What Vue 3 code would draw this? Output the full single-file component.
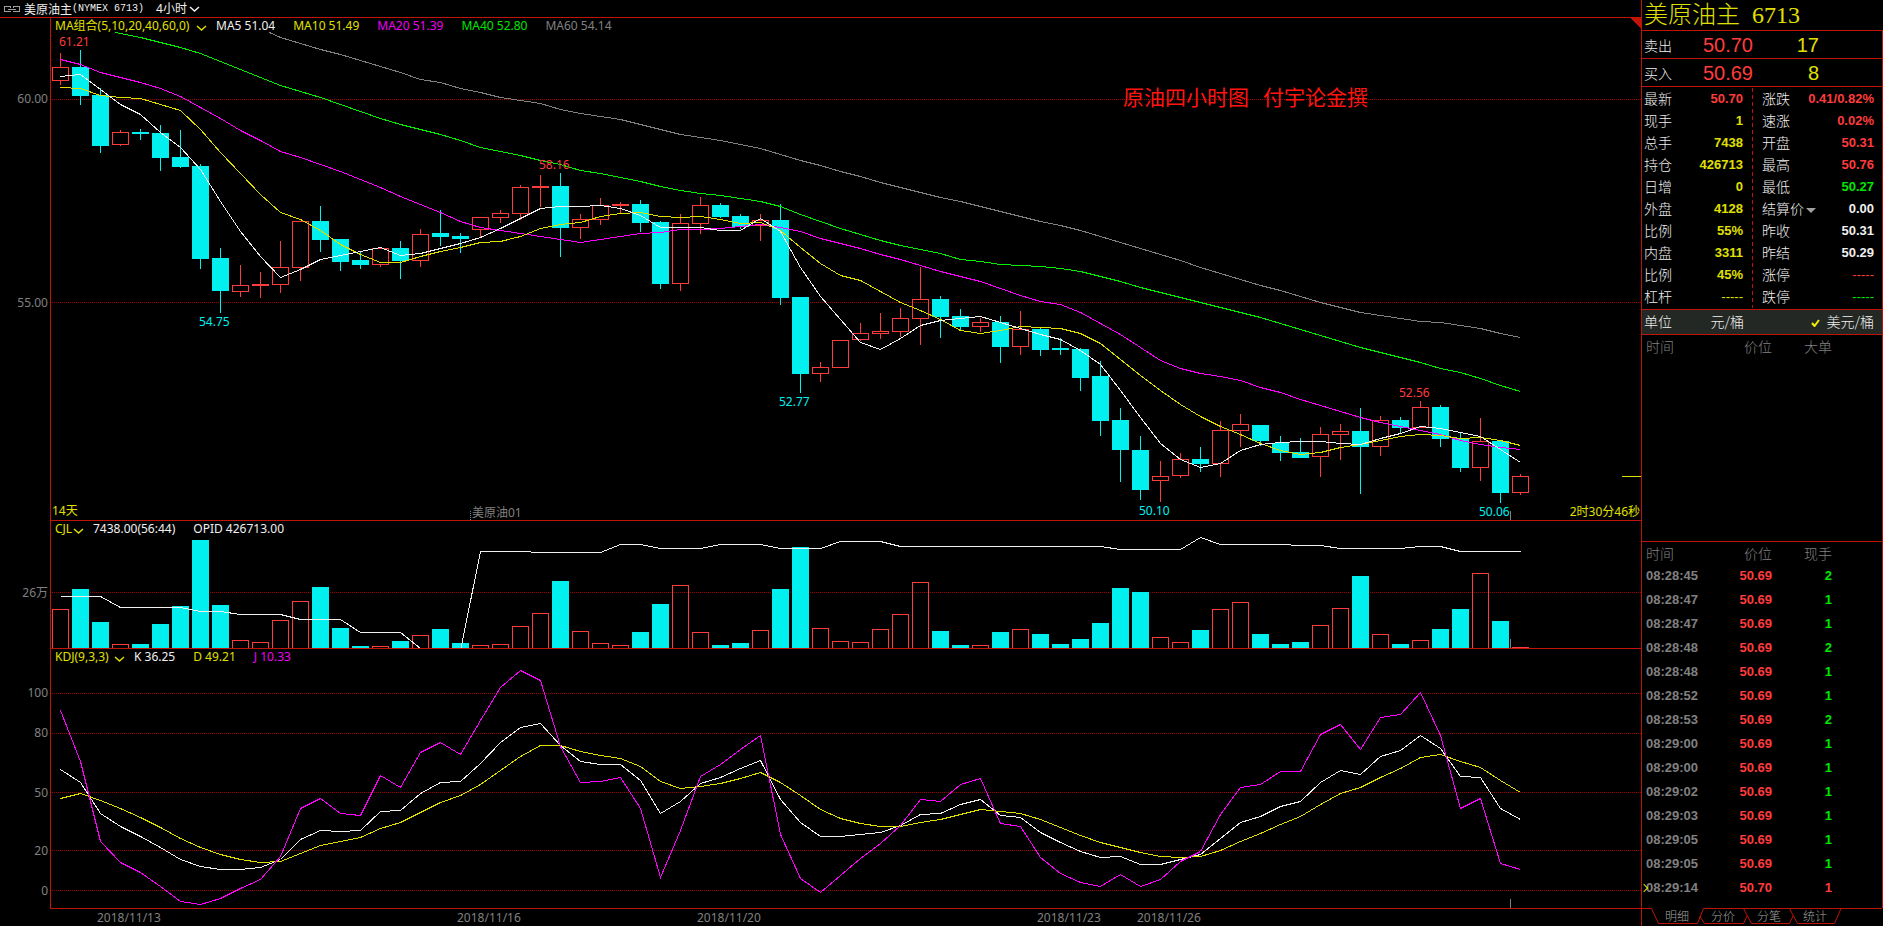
<script setup>
import { ref } from 'vue'

const FIRST_X = 60
const STEP = 20
const cx = (i) => FIRST_X + i * STEP

// Plot areas in canvas units: left, top, width, height
const price = { x: 51, y: 18, w: 1590, h: 502 }
const volume = { x: 51, y: 521, w: 1590, h: 127 }
const kdj = { x: 51, y: 649, w: 1590, h: 259 }
const box = (p) => `${p.x} ${p.y} ${p.w} ${p.h}`
const place = (p, x, y) => ({
  left: `${((x - p.x) / p.w) * 100}%`,
  top: `${((y - p.y) / p.h) * 100}%`
})
const level = (p, y) => ({ top: `${((y - p.y) / p.h) * 100}%` })

// direction, high, body top, body bottom, low
const candles = `R 53 67 81 85|C 50 67 96 105|C 88 95 146 153|R 130 132 145 146|C 129 132 134 140|C 125 133 158 171
C 130 157 167 168|C 164 166 259 269|C 248 258 291 313|R 265 285 292 297|R 272 284 286 298|R 241 267 285 293
R 221 221 268 281|C 206 221 240 252|C 239 239 262 271|C 252 260 265 269|R 248 248 265 267|C 241 248 261 279
R 229 234 261 267|C 210 233 237 246|C 233 236 239 253|R 217 217 230 238|R 210 213 218 223|R 185 187 214 220
R 175 186 188 207|C 173 186 228 257|R 214 219 228 239|R 198 205 220 225|R 202 204 206 213|C 200 204 223 232
C 221 222 284 289|R 214 223 284 291|R 197 205 224 234|C 203 205 217 218|C 214 216 227 229|R 214 220 226 241
C 204 220 298 305|C 297 297 374 393|R 362 367 374 382|R 340 340 368 368|R 323 333 340 341|R 313 331 334 339
R 308 318 332 337|R 267 299 319 345|C 296 299 317 338|C 309 316 327 330|R 318 322 327 332|C 316 322 347 363
R 311 329 347 355|C 328 329 350 356|C 338 348 350 355|C 348 349 378 391|C 361 376 421 436|C 408 420 450 482
C 436 450 490 500|R 461 476 481 502|R 453 459 476 478|C 447 459 464 472|R 421 430 464 477|R 414 424 431 447
C 425 425 441 446|C 436 443 453 461|C 438 452 458 458|R 427 434 457 477|R 424 431 435 460|C 408 431 447 494
R 416 420 447 456|C 417 420 428 434|R 401 407 428 428|C 405 407 439 447|C 433 438 468 472|R 418 441 468 481
C 441 441 493 503|R 474 476 493 495`
  .split(/[|\n]/)
  .map((row, i) => {
    const [dir, ...n] = row.trim().split(' ')
    const [high, top, bottom, low] = n.map(Number)
    return { up: dir === 'R', x: cx(i), high, top, bottom, low }
  })

const nums = (s) => s.split(' ').map(Number)
const line = (s, from = 0, lead = '') =>
  lead + nums(s).map((y, i) => `${cx(i + from) + 0.5},${y + 0.5}`).join(' ')

const averages = [
  { cls: 's-gray', pts: line('37 43 49 54 60 66 72 79 82 88 92 97 100 103 109 113 116 119 124 129 134 137 140 144 148 154 160 165 171 176 182 187 192 197 201 206 211 216 221 225 230 236 242 248 254 260 267 273 279 285 290 296 302 307 312 315 318 321 322 325 328 333 337', 11, '269.5,32.5 ') },
  { cls: 's-green', pts: line('37 42 47 53 61 69 77 85 91 97 104 111 118 124 129 134 140 147 151 155 160 164 170 173 177 181 186 190 193 195 198 201 206 214 221 228 234 240 245 249 253 259 261 264 265 266 268 271 276 281 287 292 297 302 307 312 317 323 329 335 341 347 352 357 362 368 372 378 385 391', 4, '115.5,32.5 ') },
  { cls: 's-magenta', pts: line('59 64 72 77 82 88 96 107 118 130 140 151 157 164 171 179 187 196 204 212 221 227 230 233 236 239 242 239 236 233 232 229 229 228 226 224 227 231 238 243 248 254 259 265 271 276 281 288 295 301 304 312 323 334 347 360 368 373 376 380 387 392 399 405 411 417 422 426 430 434 440 444 447 449') },
  { cls: 's-yellow', pts: line('87 88 95 97 98 104 110 129 152 173 194 212 219 230 244 254 262 262 256 251 247 242 241 236 228 224 222 216 213 212 216 217 216 219 223 222 230 247 263 275 280 291 302 310 319 330 333 330 326 327 328 333 343 359 375 390 404 416 426 434 443 450 454 452 447 444 440 436 434 435 438 437 440 445') },
  { cls: 's-white', pts: line('76 74 89 104 114 132 147 169 201 231 256 277 269 259 255 251 247 255 253 248 243 237 228 218 208 206 206 205 208 215 227 227 227 230 230 218 231 267 296 319 342 349 338 325 320 318 316 322 328 334 339 350 364 390 417 443 459 467 463 450 444 442 441 441 443 444 438 433 426 428 432 436 449 462') }
]

const bars = nums('609 589 622 644 644 624 606 540 605 640 642 620 601 587 628 646 646 641 635 629 643 645 644 626 613 581 631 643 645 632 604 585 632 645 643 630 589 547 628 641 642 629 614 582 631 645 645 632 629 634 644 639 623 588 592 637 642 630 609 602 634 644 642 625 608 576 634 644 640 629 609 573 621 647')
  .map((y, i) => ({ y, x: cx(i), up: candles[i].up }))
const openInterest = line('596 596 596 607 607 607 607 611 611 614 614 614 619 619 619 632 632 632 648 660 650 551 551 551 552 552 552 552 544 544 548 548 548 544 544 544 548 548 548 541 541 541 546 546 546 546 546 546 546 546 546 546 546 549 549 549 549 537 544 544 544 544 545 545 548 548 548 548 546 546 551 551 551 551')

const kdjLines = [
  { cls: 's-white', pts: line('769 782 813 826 836 847 859 866 869 869 867 859 839 830 831 830 811 810 793 782 781 763 742 727 723 745 761 764 764 780 813 801 783 777 768 760 799 822 836 836 834 832 825 814 813 804 799 815 817 832 842 851 857 856 864 864 859 854 838 822 816 806 801 782 770 774 756 750 735 748 776 777 808 819') },
  { cls: 's-yellow', pts: line('798 793 800 808 817 827 838 847 854 859 862 861 853 845 841 837 828 822 812 802 795 784 770 756 745 745 751 755 758 766 781 788 786 783 778 772 782 795 809 818 823 826 826 822 819 814 809 811 813 819 827 835 842 847 852 856 857 856 850 841 833 824 816 804 793 787 777 768 757 754 761 767 780 792') },
  { cls: 's-magenta', pts: line('710 761 841 862 872 886 901 904 898 888 879 856 808 798 813 815 775 787 752 742 754 720 687 670 680 746 782 781 777 808 877 830 776 764 749 735 834 878 892 875 858 843 825 799 801 784 778 823 826 857 873 882 886 874 886 879 861 851 814 787 784 771 771 734 724 749 717 714 692 735 808 798 863 869') }
]

const priceGrid = [{ y: 99, t: '60.00' }, { y: 302, t: '55.00' }]
const volumeGrid = [{ y: 592, t: '26万' }]
const kdjGrid = [{ y: 693, t: '100' }, { y: 733, t: '80' }, { y: 792, t: '50' }, { y: 850, t: '20' }, { y: 890, t: '0' }]

const marks = [
  { t: '61.21', x: 59, y: 42, cls: 'red' },
  { t: '54.75', x: 199, y: 322, cls: 'cyan' },
  { t: '58.16', x: 539, y: 165, cls: 'red' },
  { t: '52.77', x: 779, y: 402, cls: 'cyan' },
  { t: '50.10', x: 1139, y: 511, cls: 'cyan' },
  { t: '52.56', x: 1399, y: 393, cls: 'red' },
  { t: '50.06', x: 1479, y: 512, cls: 'cyan' },
  { t: '14天', x: 52, y: 511, cls: 'yellow' },
  { t: '美原油01', x: 472, y: 513, cls: 'gray' }
]
const dates = [
  { t: '2018/11/13', x: 97 },
  { t: '2018/11/16', x: 457 },
  { t: '2018/11/20', x: 697 },
  { t: '2018/11/23', x: 1037 },
  { t: '2018/11/26', x: 1137 }
]

const maLegend = [
  { t: 'MA5 51.04', cls: 'white' },
  { t: 'MA10 51.49', cls: 'yellow' },
  { t: 'MA20 51.39', cls: 'magenta' },
  { t: 'MA40 52.80', cls: 'green' },
  { t: 'MA60 54.14', cls: 'gray' }
]

const statsLeft = [
  ['最新', '50.70', 'red'], ['现手', '1', 'yellow'], ['总手', '7438', 'yellow'], ['持仓', '426713', 'yellow'],
  ['日增', '0', 'yellow'], ['外盘', '4128', 'yellow'], ['比例', '55%', 'yellow'], ['内盘', '3311', 'yellow'],
  ['比例', '45%', 'yellow'], ['杠杆', '-----', 'yellow plain']
]
const statsRight = [
  ['涨跌', '0.41/0.82%', 'red'], ['速涨', '0.02%', 'red'], ['开盘', '50.31', 'red'], ['最高', '50.76', 'red'],
  ['最低', '50.27', 'green'], ['结算价', '0.00', 'white'], ['昨收', '50.31', 'white'], ['昨结', '50.29', 'white'],
  ['涨停', '-----', 'red plain'], ['跌停', '-----', 'green plain']
]

const trades = [
  ['08:28:45', '50.69', 2], ['08:28:47', '50.69', 1], ['08:28:47', '50.69', 1], ['08:28:48', '50.69', 2],
  ['08:28:48', '50.69', 1], ['08:28:52', '50.69', 1], ['08:28:53', '50.69', 2], ['08:29:00', '50.69', 1],
  ['08:29:00', '50.69', 1], ['08:29:02', '50.69', 1], ['08:29:03', '50.69', 1], ['08:29:05', '50.69', 1],
  ['08:29:05', '50.69', 1], ['08:29:14', '50.70', 1]
]

const tabs = ['明细', '分价', '分笔', '统计']
const activeTab = ref('明细')
</script>

<template>
  <div class="terminal">
    <main class="charts">
      <header class="titlebar">
        <svg class="link-icon" width="16" height="6" viewBox="0 0 16 6" shape-rendering="crispEdges" aria-hidden="true">
          <path d="M6.5 1.5V.5H.5v5h6v-1M9.5 1.5V.5h6v5h-6v-1M4 3.5h8" />
        </svg>
        <h1>美原油主<span class="code">(NYMEX 6713)</span></h1>
        <button type="button" class="period">4小时<svg class="chev" width="11" height="6" viewBox="0 0 11 6" aria-hidden="true"><path d="M1 1l4.500 4L10 1" /></svg></button>
      </header>

      <section class="panel price-panel">
        <div class="gutter">
          <span v-for="g in priceGrid" :key="g.y" class="tick" :style="level(price, g.y)">{{ g.t }}</span>
        </div>
        <div class="plot">
          <svg class="canvas" :viewBox="box(price)" preserveAspectRatio="none" shape-rendering="crispEdges" aria-hidden="true">
            <line v-for="g in priceGrid" :key="g.y" class="grid" x1="52" x2="1641" :y1="g.y + 0.5" :y2="g.y + 0.5" />
            <g v-for="c in candles" :key="c.x" :class="c.up ? 'up' : 'down'">
              <line v-if="c.top > c.high" :x1="c.x + 0.5" :x2="c.x + 0.5" :y1="c.high" :y2="c.top" />
              <line v-if="c.low > c.bottom" :x1="c.x + 0.5" :x2="c.x + 0.5" :y1="c.bottom" :y2="c.low" />
              <rect :x="c.x - 7.5" :y="c.top + 0.5" width="16" :height="c.bottom - c.top - 1" />
            </g>
            <polyline v-for="m in averages" :key="m.cls" :class="m.cls" :points="m.pts" />
            <line class="s-gray" x1="1510.5" x2="1510.5" y1="511" y2="520" />
            <line class="s-gray dotted" x1="470.5" x2="470.5" y1="511" y2="520" />
            <line class="s-yellow" x1="1622" x2="1641" y1="476.500" y2="476.500" />
            <path class="flag" d="M1630 18H1641V28Z" />
          </svg>
          <div class="legend">
            <button type="button" class="yellow">MA组合(5,10,20,40,60,0)<svg class="chev" width="11" height="6" viewBox="0 0 11 6" aria-hidden="true"><path d="M1 1l4.500 4L10 1" /></svg></button>
            <div class="values">
              <span v-for="m in maLegend" :key="m.t" :class="m.cls">{{ m.t }}</span>
            </div>
          </div>
          <span v-for="m in marks" :key="m.t" class="mark" :class="m.cls" :style="place(price, m.x, m.y)">{{ m.t }}</span>
          <span class="mark note" :style="place(price, 1123, 96)">原油四小时图&nbsp;&nbsp; 付宇论金撰</span>
          <span class="countdown yellow">2时30分46秒</span>
        </div>
      </section>

      <section class="panel volume-panel">
        <div class="gutter">
          <span v-for="g in volumeGrid" :key="g.y" class="tick" :style="level(volume, g.y)">{{ g.t }}</span>
        </div>
        <div class="plot">
          <svg class="canvas" :viewBox="box(volume)" preserveAspectRatio="none" shape-rendering="crispEdges" aria-hidden="true">
            <line v-for="g in volumeGrid" :key="g.y" class="grid" x1="52" x2="1641" :y1="g.y + 0.5" :y2="g.y + 0.5" />
            <g v-for="b in bars" :key="b.x" :class="b.up ? 'up' : 'down'">
              <rect :x="b.x - 7.5" :y="b.y + 0.5" width="16" :height="650 - b.y" />
            </g>
            <polyline class="s-white" :points="openInterest" />
            <line class="s-gray" x1="1510.5" x2="1510.5" y1="639" y2="648" />
          </svg>
          <div class="legend">
            <button type="button" class="yellow">CJL<svg class="chev" width="11" height="6" viewBox="0 0 11 6" aria-hidden="true"><path d="M1 1l4.500 4L10 1" /></svg></button>
            <div class="values">
              <span class="white">7438.00(56:44)</span>
              <span class="white">OPID 426713.00</span>
            </div>
          </div>
        </div>
      </section>

      <section class="panel kdj-panel">
        <div class="gutter">
          <span v-for="g in kdjGrid" :key="g.y" class="tick" :style="level(kdj, g.y)">{{ g.t }}</span>
        </div>
        <div class="plot">
          <svg class="canvas" :viewBox="box(kdj)" preserveAspectRatio="none" shape-rendering="crispEdges" aria-hidden="true">
            <line v-for="g in kdjGrid" :key="g.y" class="grid" x1="52" x2="1641" :y1="g.y + 0.5" :y2="g.y + 0.5" />
            <polyline v-for="k in kdjLines" :key="k.cls" :class="k.cls" :points="k.pts" />
            <line class="s-gray" x1="1510.5" x2="1510.5" y1="899" y2="908" />
          </svg>
          <div class="legend">
            <button type="button" class="yellow">KDJ(9,3,3)<svg class="chev" width="11" height="6" viewBox="0 0 11 6" aria-hidden="true"><path d="M1 1l4.500 4L10 1" /></svg></button>
            <div class="values">
              <span class="white">K 36.25</span>
              <span class="yellow">D 49.21</span>
              <span class="magenta">J 10.33</span>
            </div>
          </div>
        </div>
      </section>

      <footer class="dates">
        <span v-for="d in dates" :key="d.t" class="date" :style="{ left: `${((d.x - 51) / 1590) * 100}%` }">{{ d.t }}</span>
      </footer>
    </main>

    <aside class="quote">
      <h2><span>美原油主</span><span>6713</span></h2>
      <div class="body">
        <div class="order"><span>卖出</span><span class="red num">50.70</span><span class="yellow num">17</span></div>
        <div class="order"><span>买入</span><span class="red num">50.69</span><span class="yellow num">8</span></div>
        <div class="stats">
          <dl>
            <div v-for="(s, i) in statsLeft" :key="i"><dt>{{ s[0] }}</dt><dd :class="s[2]">{{ s[1] }}</dd></div>
          </dl>
          <dl>
            <div v-for="(s, i) in statsRight" :key="i">
              <dt v-if="s[0] !== '结算价'">{{ s[0] }}</dt>
              <dt v-else><button type="button">{{ s[0] }}<i class="caret"></i></button></dt>
              <dd :class="s[2]">{{ s[1] }}</dd>
            </div>
          </dl>
        </div>
        <div class="unit">
          <span>单位</span>
          <button type="button">元/桶</button>
          <button type="button" aria-pressed="true"><svg width="9" height="8" viewBox="0 0 9 8" aria-hidden="true"><path d="M1 4l2.500 3L8 1" /></svg>美元/桶</button>
        </div>
        <table class="tape large">
          <thead><tr><th>时间</th><th>价位</th><th>大单</th></tr></thead>
        </table>
        <table class="tape ticks">
          <thead><tr><th>时间</th><th>价位</th><th>现手</th></tr></thead>
          <tbody>
            <tr v-for="(t, i) in trades" :key="i" :class="{ last: i === trades.length - 1 }">
              <td>{{ t[0] }}</td><td class="red">{{ t[1] }}</td><td :class="i === trades.length - 1 ? 'red' : 'green'">{{ t[2] }}</td>
            </tr>
          </tbody>
        </table>
      </div>
      <nav class="tabs">
        <svg width="240" height="18" viewBox="0 0 240 18" aria-hidden="true">
          <path d="M0 .5H9.500L16.500 15.500H55.500L61.500 .5H240M57.500 8L62.500 15.500H101.500L105 8M101.500 .5L109.500 15.500H147.500L151 8M147.500 .5L155.500 15.500H192.500L199 .5" />
        </svg>
        <button v-for="t in tabs" :key="t" type="button" :aria-pressed="t === activeTab" @click="activeTab = t">{{ t }}</button>
      </nav>
    </aside>
  </div>
</template>

<style>
body { margin: 0; background: #000; }
</style>

<style scoped>
.terminal {
  --line: #c01408;
  display: grid;
  grid-template-columns: minmax(0, 1fr) 242px;
  height: 100vh;
  min-height: 780px;
  background: #000;
  color: #f0f0f0;
  font: 12px/14px "Noto Sans", "Noto Sans CJK SC", sans-serif;
  overflow: hidden;
}
button {
  padding: 0;
  border: 0;
  background: none;
  color: inherit;
  font: inherit;
  cursor: pointer;
}
.red { color: #ff3c3c; }
.cyan { color: #00f0f0; }
.yellow { color: #e0e000; }
.green { color: #00e600; }
.magenta { color: #f000f0; }
.gray { color: #808080; }
.white { color: #f0f0f0; }

.charts { display: flex; flex-direction: column; min-width: 0; }
.titlebar {
  display: flex;
  align-items: center;
  height: 17px;
  padding-left: 4px;
  border-bottom: 1px solid var(--line);
}
.link-icon { margin-right: 4px; fill: none; stroke: #a0a0a0; }
h1 { margin: 0 12px 0 0; font: 12px/16px "Noto Sans CJK SC", sans-serif; display: flex; }
.code { font-family: "Liberation Mono", monospace; font-size: 10px; white-space: pre; }
.period { display: flex; align-items: center; gap: 2px; }
.chev { fill: none; stroke: currentColor; stroke-width: 1.5; }

.panel { display: grid; grid-template-columns: 50px minmax(0, 1fr); min-height: 0; }
.price-panel { flex: 503 1 0; }
.volume-panel { flex: 128 1 0; }
.kdj-panel { flex: 260 1 0; }
.gutter { position: relative; }
.tick { position: absolute; right: 2px; margin-top: -7px; color: #808080; }
.plot {
  position: relative;
  border-left: 1px solid var(--line);
  border-bottom: 1px solid var(--line);
  overflow: hidden;
}
.canvas { position: absolute; inset: 0; width: 100%; height: 100%; }
.canvas polyline, .canvas line { fill: none; stroke-width: 1; }
.grid { stroke: #a00000; stroke-dasharray: 1 1; }
.up { stroke: #ff3c3c; fill: none; }
.down { stroke: #00f0f0; fill: #00f0f0; }
.s-white { stroke: #f0f0f0; }
.s-yellow { stroke: #e0e000; }
.s-magenta { stroke: #ff00ff; }
.s-green { stroke: #00f000; }
.s-gray { stroke: #808080; }
.dotted { stroke-dasharray: 1 1; }
.flag { fill: var(--line); }

.legend { position: relative; display: flex; gap: 9px; padding: 1px 4px; white-space: nowrap; }
.legend button { display: flex; align-items: center; justify-content: space-between; min-width: 29px; }
.price-panel .legend button { min-width: 152px; }
.kdj-panel .legend button { min-width: 70px; }
.legend .chev { margin-top: 4px; }
.values { display: flex; gap: 18px; }
.mark { position: absolute; margin-top: -7px; white-space: nowrap; }
.note { margin-top: -14px; font: 21px/28px "Noto Sans CJK SC", sans-serif; color: #ff1410; }
.countdown { position: absolute; right: 1px; bottom: 1px; }
.dates { position: relative; height: 17px; margin-left: 51px; color: #808080; }
.date { position: absolute; top: 2px; }

.quote {
  display: flex;
  flex-direction: column;
  border-left: 1px solid var(--line);
  font: 300 14px/20px "Noto Sans CJK SC", sans-serif;
}
h2 {
  display: flex;
  gap: 12px;
  margin: 0;
  padding-left: 2px;
  font: 300 24px/30px "Liberation Serif", "Noto Sans CJK SC", serif;
  color: #e0e000;
}
.body {
  display: flex;
  flex: 1;
  flex-direction: column;
  min-height: 0;
  border-top: 1px solid var(--line);
  border-right: 1px solid var(--line);
}
.order {
  box-sizing: border-box;
  display: grid;
  grid-template-columns: 55px 54px 66px;
  align-items: center;
  height: 28px;
  padding-left: 2px;
  border-bottom: 1px solid var(--line);
}
.num { font: 20px/26px "Liberation Sans", Arial, sans-serif; text-align: right; }
.stats { display: grid; grid-template-columns: 111px 1fr; padding: 1px 0; border-bottom: 1px solid var(--line); }
dl { margin: 0; padding: 0 8px 0 9px; }
dl:first-child {
  padding: 0 10px 0 2px;
  background: repeating-linear-gradient(var(--line) 0 4px, transparent 4px 7px) right / 1px 100% no-repeat;
}
dl > div { display: flex; justify-content: space-between; height: 22px; }
dd { margin: 0; font: bold 13px/22px "Liberation Sans", Arial, sans-serif; }
dd.plain { font-weight: 400; }
dt button { display: flex; align-items: center; gap: 2px; }
.caret { border: 5px solid transparent; border-top-color: #a0a0a0; border-bottom: 0; margin-top: 4px; }
.unit {
  display: grid;
  grid-template-columns: 40px 60px 1fr;
  align-items: start;
  height: 24px;
  line-height: 22px;
  padding: 0 8px 0 2px;
  border-bottom: 1px solid var(--line);
  background: #242824;
}
.unit button { text-align: right; }
.unit svg { margin-right: 6px; fill: none; stroke: #f0f000; stroke-width: 2; }

.tape { width: 190px; border-collapse: collapse; table-layout: fixed; color: #808080; }
.tape th { height: 22px; padding: 0; font-weight: 300; text-align: right; vertical-align: top; line-height: 22px; }
.tape th:first-child, .tape td:first-child { width: 70px; padding-left: 4px; text-align: left; }
.tape th:nth-child(2), .tape td:nth-child(2) { width: 56px; }
.tape td { height: 24px; padding: 0; font: bold 13px/24px "Liberation Sans", Arial, sans-serif; text-align: right; }
.ticks { margin-top: auto; margin-bottom: 8px; position: relative; }
.ticks::before { content: ""; position: absolute; top: -1px; left: 0; width: 240px; border-top: 1px solid var(--line); }
.ticks td:first-child { position: relative; }
.last td:first-child::before {
  content: "";
  position: absolute;
  left: -1px;
  top: 9px;
  width: 5px;
  height: 5px;
  border: solid #e0e000;
  border-width: 1px 1px 0 0;
  transform: rotate(45deg);
}
.tabs { position: relative; display: flex; align-items: flex-start; height: 18px; padding-left: 12px; color: #a0a0a0; }
.tabs svg { position: absolute; top: 0; left: 0; fill: none; stroke: var(--line); }
.tabs button { position: relative; width: 46px; font: 300 12px/15px "Noto Sans CJK SC", sans-serif; }
</style>
